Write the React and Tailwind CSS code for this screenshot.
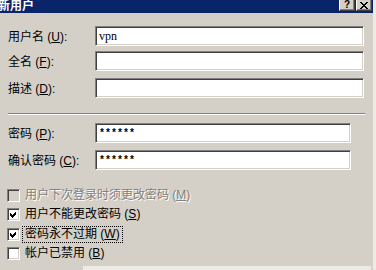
import React from "react";

const cjk = "[font-family:'Liberation_Sans','Noto_Sans_CJK_SC',sans-serif]";

function Label({ text, k }) {
  return (
    <span className="text-[12px] leading-[12px] text-black whitespace-nowrap">
      {text} (<u>{k}</u>):
    </span>
  );
}

function Field({ w, value, stars }) {
  return (
    <div
      className={`${w} h-[20px] bg-white border border-t-[#808080] border-l-[#808080] border-r-white border-b-white shadow-[inset_1px_1px_0_#404040,inset_-1px_-1px_0_#d4d0c8] flex items-center pl-[3px]`}
    >
      {stars ? (
        <span className="[font-family:'Liberation_Mono',monospace] font-bold text-[10px] leading-[10px] text-black pt-[2px]">
          {value}
        </span>
      ) : (
        <span className="[font-family:'Liberation_Serif',serif] text-[12px] leading-[12px] text-black">
          {value}
        </span>
      )}
    </div>
  );
}

function Box({ checked, disabled }) {
  return (
    <div
      className={`w-[13px] h-[13px] shrink-0 border border-t-[#808080] border-l-[#808080] border-r-white border-b-white shadow-[inset_1px_1px_0_#404040,inset_-1px_-1px_0_#d4d0c8] ${
        disabled ? "bg-[#d4d0c8]" : "bg-white"
      } flex items-center justify-center`}
    >
      {checked && (
        <svg width="9" height="9" viewBox="0 0 9 9" shapeRendering="crispEdges">
          <path
            d="M1 3h1v1h1v1h1v-1h1v-1h1v-1h1v3h-1v1h-1v1h-1v1h-1v-1h-1v-1h-1z"
            fill="#000"
          />
        </svg>
      )}
    </div>
  );
}

function Check({ text, k, checked, disabled, focus, cls }) {
  return (
    <div className={`flex items-center h-[13px] ${cls}`}>
      <Box checked={checked} disabled={disabled} />
      <span
        className={`ml-[3px] px-[2px] py-[1px] text-[12px] leading-[13px] whitespace-nowrap ${
          disabled ? "text-[#808080] [text-shadow:1px_1px_0_#fff]" : "text-black"
        } ${focus ? "outline outline-1 outline-dotted outline-black" : ""}`}
      >
        {text} (<u>{k}</u>)
      </span>
    </div>
  );
}

function TitleBtn({ children }) {
  return (
    <div className="w-[16px] h-[12px] -mt-[1px] bg-[#d4d0c8] border border-t-white border-l-white border-r-[#404040] border-b-[#404040] shadow-[inset_-1px_-1px_0_#808080] flex items-center justify-center text-black">
      {children}
    </div>
  );
}

export default function App() {
  return (
    <div className={`w-[376px] h-[270px] bg-[#d4d0c8] flex overflow-hidden ${cjk}`}>
      <div className="w-[373px] flex flex-col">
        <div className="h-[13px] bg-[#0a246a] flex items-start">
          <span className="-ml-[2px] text-white font-bold text-[12px] leading-[13px] whitespace-nowrap">
            新用户
          </span>
          <div className="flex-1" />
          <div className="flex gap-[1px] mr-[1px]">
            <TitleBtn>
              <span className="text-[10px] leading-[10px] font-bold [font-family:'Liberation_Sans',sans-serif]">?</span>
            </TitleBtn>
            <TitleBtn>
              <svg width="8" height="7" viewBox="0 0 8 7" shapeRendering="crispEdges">
                <path d="M0 0h2v1h1v1h2v-1h1v-1h2v1h-1v1h-1v1h-1v1h1v1h1v1h1v1h-2v-1h-1v-1h-2v1h-1v1h-2v-1h1v-1h1v-1h1v-1h-1v-1h-1v-1h-1z" fill="#000" />
              </svg>
            </TitleBtn>
          </div>
        </div>
        <div className="pl-[8px] pt-[13px] flex flex-col">
          <div className="flex items-center h-[20px]">
            <div className="w-[87px]"><Label text="用户名" k="U" /></div>
            <Field w="w-[269px]" value="vpn" />
          </div>
          <div className="flex items-center h-[20px] mt-[5px]">
            <div className="w-[87px]"><Label text="全名" k="F" /></div>
            <Field w="w-[269px]" value="" />
          </div>
          <div className="flex items-center h-[20px] mt-[7px]">
            <div className="w-[87px]"><Label text="描述" k="D" /></div>
            <Field w="w-[269px]" value="" />
          </div>
          <div className="mt-[15px] w-[357px] h-[2px] border-t border-t-[#808080] border-b border-b-white" />
          <div className="flex items-center h-[20px] mt-[8px]">
            <div className="w-[87px]"><Label text="密码" k="P" /></div>
            <Field w="w-[256px]" value="******" stars />
          </div>
          <div className="flex items-center h-[20px] mt-[7px]">
            <div className="w-[87px]"><Label text="确认密码" k="C" /></div>
            <Field w="w-[256px]" value="******" stars />
          </div>
          <div className="flex flex-col mt-[19px] -ml-[1px]">
            <Check text="用户下次登录时须更改密码" k="M" disabled />
            <Check text="用户不能更改密码" k="S" checked cls="mt-[6px]" />
            <Check text="密码永不过期" k="W" checked focus cls="mt-[7px]" />
            <Check text="帐户已禁用" k="B" cls="mt-[6px]" />
          </div>
          <div className="mt-[6px] ml-[75px] w-[288px] h-[4px] bg-[#ecebe6]" />
        </div>
      </div>
      <div className="w-[3px] bg-[#ecebe6]" />
    </div>
  );
}
